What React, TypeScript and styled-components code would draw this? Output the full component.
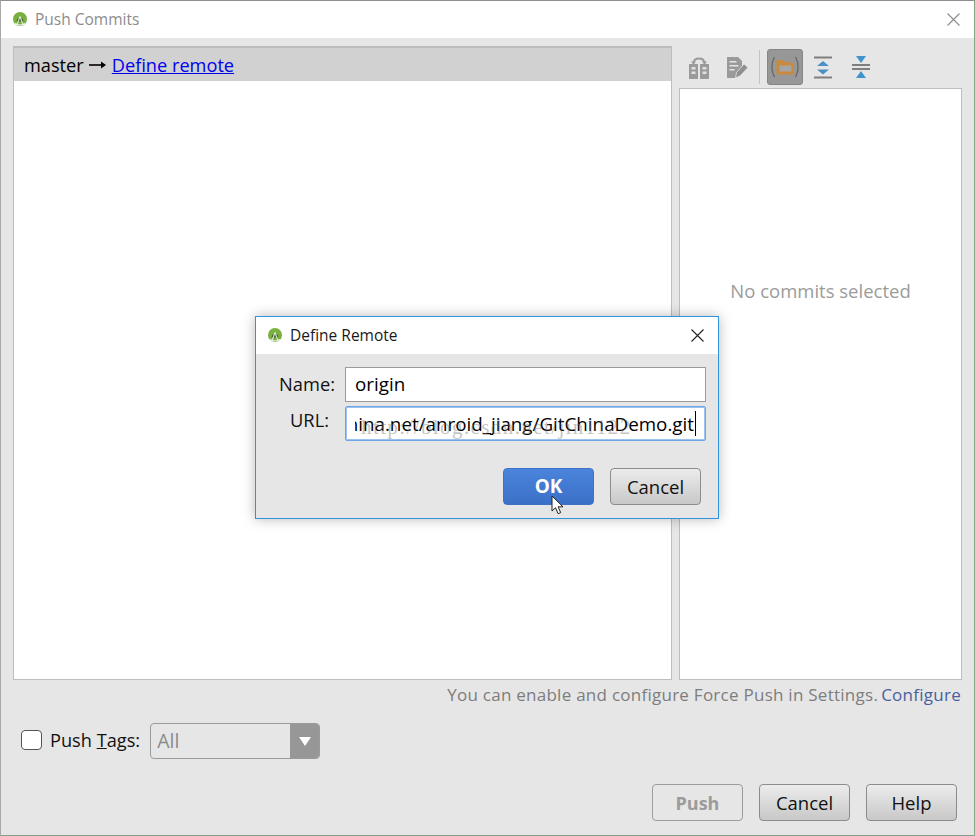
import React from 'react'
import styled, { createGlobalStyle } from 'styled-components'

const GlobalStyle = createGlobalStyle`
    html, body {
        margin: 0;
        padding: 0;
        background: #e6e6e6;
    }
    body {
        font-family: "Open Sans", "Liberation Sans", sans-serif;
    }
`

const Window = styled.div`
    position: relative;
    width: 975px;
    height: 836px;
    box-sizing: border-box;
    display: flex;
    flex-direction: column;
    background: #e6e6e6;
    border-top: 1px solid #8f8f8f;
    border-left: 1px solid #a8a8a8;
    border-right: 1px solid #86a886;
    border-bottom: 1px solid #8c9c8c;
    overflow: hidden;
`
const TitleBar = styled.div`
    height: 37px;
    flex: none;
    display: flex;
    align-items: center;
    padding: 0 14px 0 11px;
    background: #fff;
`
const TitleText = styled.span<{ $dim?: boolean }>`
    margin-left: 7px;
    padding-bottom: 2px;
    font-size: 15.5px;
    color: ${p => (p.$dim ? '#8c8c8c' : '#1a1a1a')};
    flex: 1;
`
const Main = styled.div`
    height: 642px;
    flex: none;
    display: grid;
    grid-template-columns: 659px 283px;
    column-gap: 7px;
    padding: 8px 0 0 12px;
    box-sizing: border-box;
`
const CommitsPanel = styled.div`
    background: #fff;
    border: 1px solid #bdbdbd;
    border-top-width: 2px;
    box-sizing: border-box;
`
const BranchRow = styled.div`
    height: 33px;
    display: flex;
    align-items: center;
    gap: 5px;
    padding-left: 10px;
    background: #d1d1d1;
    font-size: 18.2px;
    color: #000;
`
const BlueLink = styled.a`
    color: #0000ee;
    text-decoration: underline;
`
const DetailsColumn = styled.div`
    display: flex;
    flex-direction: column;
`
const Toolbar = styled.div`
    height: 42px;
    flex: none;
    display: flex;
    align-items: center;
    gap: 2px;
    padding-left: 2px;
    box-sizing: border-box;
`
const ToolIcon = styled.div<{ $active?: boolean }>`
    width: 36px;
    height: 36px;
    display: flex;
    align-items: center;
    justify-content: center;
    box-sizing: border-box;
    border-radius: 3px;
    background: ${p => (p.$active ? '#979797' : 'transparent')};
    border: 1px solid ${p => (p.$active ? '#858585' : 'transparent')};
`
const ToolDivider = styled.div`
    width: 1px;
    height: 34px;
    margin: 0 5px 0 2px;
    background: #c4c4c4;
`
const DetailsPanel = styled.div`
    flex: 1;
    background: #fff;
    border: 1px solid #bdbdbd;
    display: flex;
    justify-content: center;
    padding-top: 189px;
    box-sizing: border-box;
    font-size: 18.5px;
    color: #9b9b9b;
`
const HintRow = styled.div`
    height: 30px;
    display: flex;
    align-items: center;
    justify-content: flex-end;
    gap: 3px;
    padding: 0 13px 2px 0;
    box-sizing: border-box;
    font-size: 17px;
    letter-spacing: 0.26px;
    color: #7d7d7d;
`
const ConfigureLink = styled.span`
    color: #4a5f9e;
`
const TagsRow = styled.div`
    height: 60px;
    display: flex;
    align-items: center;
    padding-left: 20px;
    font-size: 18.2px;
    color: #111;
`
const CheckBox = styled.div`
    width: 21px;
    height: 20px;
    margin-right: 8px;
    box-sizing: border-box;
    background: #fff;
    border: 1px solid #555;
    border-radius: 4px;
`
const Underlined = styled.span`
    text-decoration: underline;
`
const Combo = styled.div`
    width: 170px;
    height: 36px;
    margin: 2px 0 0 10px;
    display: flex;
    box-sizing: border-box;
    border: 1px solid #9a9a9a;
    border-radius: 4px;
    overflow: hidden;
`
const ComboValue = styled.div`
    flex: 1;
    display: flex;
    align-items: center;
    padding: 0 0 2px 6px;
    font-size: 19.5px;
    color: #8a8a8a;
`
const ComboArrow = styled.div`
    width: 29px;
    background: #979797;
    display: flex;
    align-items: center;
    justify-content: center;
    &::after {
        content: '';
        border-left: 6px solid transparent;
        border-right: 6px solid transparent;
        border-top: 9px solid #fff;
    }
`
const ButtonRow = styled.div`
    display: flex;
    justify-content: flex-end;
    gap: 16px;
    padding: 14px 17px 0 0;
`
const Button = styled.div<{ $disabled?: boolean; $primary?: boolean }>`
    width: 91px;
    height: 37px;
    box-sizing: border-box;
    display: flex;
    align-items: center;
    justify-content: center;
    padding-bottom: ${p => (p.$disabled ? '0' : '1px')};
    border-radius: 4px;
    font-size: ${p => (p.$primary ? '19px' : p.$disabled ? '18px' : '18.5px')};
    border: 1px solid ${p => (p.$primary ? '#3f72c4' : p.$disabled ? '#9c9c9c' : '#8c8c8c')};
    color: ${p => (p.$primary ? '#fff' : p.$disabled ? '#9b9b9b' : '#111')};
    font-weight: ${p => (p.$primary || p.$disabled ? 700 : 400)};
    background: ${p =>
        p.$primary
            ? 'linear-gradient(#4b84dc, #3b70c6)'
            : p.$disabled
            ? '#e6e6e6'
            : 'linear-gradient(#ececec, #c8c8c8)'};
`
const Dialog = styled.div`
    position: absolute;
    left: 254px;
    top: 315px;
    width: 464px;
    height: 203px;
    box-sizing: border-box;
    display: flex;
    flex-direction: column;
    background: #e6e6e6;
    border: 1px solid #2f93dd;
    box-shadow: 0 0 12px rgba(0, 0, 0, 0.28);
`
const DialogTitle = styled(TitleBar)`
    height: 37px;
`
const FormGrid = styled.div`
    display: grid;
    grid-template-columns: 79px 361px;
    grid-template-rows: 35px 35px;
    row-gap: 4px;
    margin-top: 13px;
    column-gap: 10px;
    font-size: 18.3px;
    color: #111;
`
const FieldLabel = styled.div<{ $raised?: boolean }>`
    display: flex;
    align-items: center;
    justify-content: flex-end;
    padding-bottom: ${p => (p.$raised ? '8px' : '2px')};
    padding-right: ${p => (p.$raised ? '6px' : '0')};
`
const Field = styled.div<{ $focused?: boolean }>`
    position: relative;
    box-sizing: border-box;
    display: flex;
    align-items: center;
    background: #fff;
    font-size: 18.8px;
    color: #000;
    padding: 0 9px 2px 9px;
    border: 1px solid ${p => (p.$focused ? '#6fa4e6' : '#9a9a9a')};
    ${p =>
        p.$focused &&
        `
        box-shadow: inset 0 0 0 1px #9cc2f0;
        border-radius: 2px;
        padding: 0 9px 0 9px;
    `}
`
const UrlClip = styled.div`
    flex: 1;
    min-width: 0;
    display: flex;
    align-items: center;
    justify-content: flex-end;
    overflow: hidden;
`
const Caret = styled.span`
    width: 1px;
    height: 25px;
    margin-left: 1px;
    background: #000;
    flex: none;
`
const UrlText = styled.span`
    white-space: nowrap;
`
const Watermark = styled.span`
    position: absolute;
    left: 15px;
    top: 8px;
    font-family: "Liberation Serif", serif;
    font-size: 21px;
    letter-spacing: 1.4px;
    white-space: nowrap;
    color: rgba(110, 110, 110, 0.42);
`
const DialogButtons = styled.div`
    display: flex;
    justify-content: flex-end;
    gap: 16px;
    padding: 27px 17px 0 0;
`
const Pointer = styled.svg`
    position: absolute;
    left: 295px;
    top: 178px;
`

const AndroidLogo = () => (
    <svg width="16" height="16" viewBox="0 0 16 16">
        <circle cx="8" cy="7" r="7" fill="#78b13f" />
        <path d="M4.600 9.500a3.400 3.400 0 0 1 6.800 0z" fill="#3f5f2a" />
        <path d="M8 4.500 4.500 14M8 4.500 11.500 14" stroke="#dfe8d8" strokeWidth="1.100" fill="none" />
        <path d="M3 11.500c3 1.800 7 1.800 10 0" stroke="#f0f0f0" strokeWidth="1.200" fill="none" />
    </svg>
)

const CloseIcon = ({ color }: { color: string }) => (
    <svg width="13" height="13" viewBox="0 0 13 13">
        <path d="M.5.5l12 12M12.500.5l-12 12" stroke={color} strokeWidth="1.100" fill="none" />
    </svg>
)

const ArrowGlyph = () => (
    <svg width="18" height="12" viewBox="0 0 18 12">
        <path d="M0 6h15" stroke="#000" strokeWidth="1.600" />
        <path d="M12 2.500 17 6l-5 3.500z" fill="#000" />
    </svg>
)

const BranchesIcon = () => (
    <svg width="22" height="23" viewBox="0 0 22 23">
        <path d="M1 8h9v15H1zM12 8h9v15h-9z" fill="#9a9a9a" />
        <path d="M3.500 11h4v2.500h-4zM3.500 15.500h4V18h-4zM14.500 11h4v2.500h-4zM14.500 15.500h4V18h-4z" fill="#e0e0e0" />
        <path d="M5.500 7C6 1 16 1 16.500 7" stroke="#9a9a9a" strokeWidth="1.800" fill="none" />
        <path d="M3 5.500h5L5.500 9zM14 5.500h5L16.500 9z" fill="#9a9a9a" />
    </svg>
)

const EditLogIcon = () => (
    <svg width="22" height="23" viewBox="0 0 22 23">
        <path d="M1 1h11l4 4v5l-6 9v3H1z" fill="#9a9a9a" />
        <path d="M3.500 5h7v1.600h-7zM3.500 9h9v1.600h-9zM3.500 13h5v1.600h-5z" fill="#e4e4e4" />
        <path d="M9.500 22l1-5.500 7.500-8.500 4 3.500-8 8.500z" fill="#8f8f8f" stroke="#e6e6e6" strokeWidth=".8" />
    </svg>
)

const FolderIcon = () => (
    <svg width="30" height="24" viewBox="0 0 30 24">
        <path d="M4.500 2C1 8 1 16 4.500 22M25.500 2C29 8 29 16 25.500 22" stroke="#666" strokeWidth="1.300" fill="none" />
        <path d="M6.500 5h7l2 2.500h8v12h-17z" fill="#c98a3e" />
        <path d="M9.500 10.500h12v6h-12z" fill="#a5a5a5" />
    </svg>
)

const ExpandIcon = () => (
    <svg width="20" height="23" viewBox="0 0 20 23">
        <path d="M1 1.500h18M1 21.500h18" stroke="#7f7f7f" strokeWidth="2" />
        <path d="M10 5l6 5H4zM10 18.500l-6-5h12z" fill="#4a90c4" />
    </svg>
)

const CollapseIcon = () => (
    <svg width="20" height="24" viewBox="0 0 20 24">
        <path d="M1 10h18M1 14h18" stroke="#7f7f7f" strokeWidth="2" />
        <path d="M10 8L5 1h10zM10 16l5 7H5z" fill="#3f94cc" />
    </svg>
)

const App = () => (
    <Window>
        <GlobalStyle />
        <TitleBar>
            <AndroidLogo />
            <TitleText $dim>Push Commits</TitleText>
            <CloseIcon color="#8c8c8c" />
        </TitleBar>
        <Main>
            <CommitsPanel>
                <BranchRow>
                    <span>master</span>
                    <ArrowGlyph />
                    <BlueLink>Define remote</BlueLink>
                </BranchRow>
            </CommitsPanel>
            <DetailsColumn>
                <Toolbar>
                    <ToolIcon><BranchesIcon /></ToolIcon>
                    <ToolIcon><EditLogIcon /></ToolIcon>
                    <ToolDivider />
                    <ToolIcon $active><FolderIcon /></ToolIcon>
                    <ToolIcon><ExpandIcon /></ToolIcon>
                    <ToolIcon><CollapseIcon /></ToolIcon>
                </Toolbar>
                <DetailsPanel>No commits selected</DetailsPanel>
            </DetailsColumn>
        </Main>
        <HintRow>
            <span>You can enable and configure Force Push in Settings.</span>
            <ConfigureLink>Configure</ConfigureLink>
        </HintRow>
        <TagsRow>
            <CheckBox />
            <span>Push <Underlined>T</Underlined>ags:</span>
            <Combo>
                <ComboValue>All</ComboValue>
                <ComboArrow />
            </Combo>
        </TagsRow>
        <ButtonRow>
            <Button $disabled>Push</Button>
            <Button>Cancel</Button>
            <Button>Help</Button>
        </ButtonRow>
        <Dialog>
            <DialogTitle>
                <AndroidLogo />
                <TitleText>Define Remote</TitleText>
                <CloseIcon color="#222" />
            </DialogTitle>
            <FormGrid>
                <FieldLabel>Name:</FieldLabel>
                <Field>origin</Field>
                <FieldLabel $raised>URL:</FieldLabel>
                <Field $focused>
                    <UrlClip>
                        <UrlText>https://git.oschina.net/anroid_jiang/GitChinaDemo.git</UrlText>
                        <Caret />
                    </UrlClip>
                    <Watermark>http://blog.csdn.net/jin1122</Watermark>
                </Field>
            </FormGrid>
            <DialogButtons>
                <Button $primary>OK</Button>
                <Button>Cancel</Button>
            </DialogButtons>
            <Pointer width="14" height="20" viewBox="0 0 14 20">
                <path d="M1 1v15l3.500-3.300 2.600 6 2.600-1.100-2.600-5.800H12z" fill="#fff" stroke="#222" strokeWidth="1" />
            </Pointer>
        </Dialog>
    </Window>
)

export default App
